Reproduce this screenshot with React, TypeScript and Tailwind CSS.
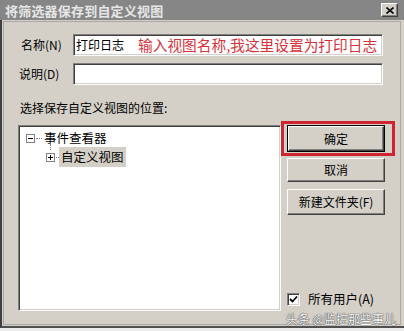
import React from "react";

const inset =
  "border border-t-[#808080] border-l-[#808080] border-b-white border-r-white shadow-[inset_1px_1px_0_#404040,inset_-1px_-1px_0_#d4d0c8]";
const raised =
  "border border-t-white border-l-white border-b-[#404040] border-r-[#404040] shadow-[inset_-1px_-1px_0_#808080]";

function TreeBox({ open }: { open: boolean }) {
  return (
    <span className="w-[9px] h-[9px] border border-[#808080] bg-white flex items-center justify-center relative shrink-0">
      <span className="absolute w-[5px] h-[1px] bg-black" />
      {!open && <span className="absolute w-[1px] h-[5px] bg-black" />}
    </span>
  );
}

export default function App() {
  return (
    <div className="w-[404px] h-[331px] bg-[#ececec] flex flex-col overflow-hidden text-black font-['Noto_Sans_CJK_SC','Liberation_Sans',sans-serif]">
      {/* title bar */}
      <div className="h-[20px] bg-[#868686] flex items-center justify-between pl-[5px] pr-[6px] shrink-0">
        <span className="text-[13px] font-bold text-[#e6e6e6] leading-none tracking-[0.2px]">
          将筛选器保存到自定义视图
        </span>
        <button className={`w-[17px] h-[14px] bg-[#d4d0c8] flex items-center justify-center ${raised}`}>
          <svg width="8" height="7" viewBox="0 0 8 7">
            <path d="M0.5 0.5 L7.5 6.5 M7.5 0.5 L0.5 6.5" stroke="#000" strokeWidth="1.6" />
          </svg>
        </button>
      </div>

      {/* body */}
      <div className="flex-1 bg-[#d4d0c8] border-l-2 border-[#404040] border-b-2 border-b-[#505050] pl-[1px] pr-[3px] pt-[1px] pb-[1px] mb-[3px] flex">
        <div className="flex-1 border border-[#a8a8a8] relative flex flex-col text-[12px] leading-none">
          {/* name */}
          <div className="flex items-center mt-[12px]">
            <span className="w-[52px] pl-[17px] box-content whitespace-nowrap">名称(N)</span>
            <div className={`w-[310px] h-[22px] bg-white flex items-center pl-[2px] overflow-hidden ${inset}`}>
              <span className="whitespace-nowrap shrink-0">打印日志</span>
              <span className="ml-[14px] text-[14.7px] text-[#d6323c] whitespace-nowrap shrink-0">
                输入视图名称,我这里设置为打印日志
              </span>
            </div>
          </div>
          {/* description */}
          <div className="flex items-center mt-[7px]">
            <span className="w-[54px] pl-[15px] box-content whitespace-nowrap">说明(D)</span>
            <div className={`w-[310px] h-[22px] bg-white ${inset}`} />
          </div>

          <div className="mt-[17px] pl-[16px]">选择保存自定义视图的位置:</div>

          <div className="flex mt-[11px] flex-1 mb-[13px]">
            {/* tree */}
            <div className={`ml-[14px] w-[263px] bg-white ${inset} pt-[4px]`}>
              <div className="flex items-center h-[17px] pl-[7px]">
                <TreeBox open />
                <span className="w-[6px] border-t border-dotted border-[#808080] mx-[1px]" />
                <span className="ml-[1px] text-[12.5px]">事件查看器</span>
              </div>
              <div className="flex items-center h-[20px] pl-[27px] relative">
                <span className="absolute left-[31px] top-[-3px] h-[6px] border-l border-dotted border-[#808080]" />
                <TreeBox open={false} />
                <span className="w-[3px] border-t border-dotted border-[#808080] ml-[1px]" />
                <span className="bg-[#d4d0c8] h-[20px] px-[2px] flex items-center text-[12.5px]">自定义视图</span>
              </div>
            </div>

            {/* buttons */}
            <div className="ml-[6px] w-[98px] flex flex-col">
              <div className="relative">
                <div className="border border-black h-[27px]">
                  <button className={`w-full h-full bg-[#d4d0c8] flex items-center justify-center ${raised}`}>
                    确定
                  </button>
                </div>
                <span className="absolute left-[-6px] right-[-10px] top-[-4px] bottom-[-4px] border-[3px] border-[#cf2530]" />
              </div>
              <button className={`mt-[6px] h-[24px] bg-[#d4d0c8] flex items-center justify-center ${raised}`}>
                取消
              </button>
              <button className={`mt-[7px] h-[26px] bg-[#d4d0c8] flex items-center justify-center ${raised}`}>
                新建文件夹(F)
              </button>
              <div className="mt-auto mb-[5px] flex items-center">
                <span className={`w-[13px] h-[13px] bg-white flex items-center justify-center ${inset}`}>
                  <svg width="9" height="9" viewBox="0 0 9 9">
                    <path d="M1 4 L3.5 6.5 L8 1.5" stroke="#000" strokeWidth="1.8" fill="none" />
                  </svg>
                </span>
                <span className="ml-[8px] text-[12.5px]">所有用户(A)</span>
              </div>
            </div>
          </div>

          {/* watermark */}
          <span className="absolute right-[4px] bottom-[-1px] text-[12px] text-[#f8f8f8] [text-shadow:0_0_1px_#555,0_0_1px_#555,0_0_1px_#555]">
            头条 @监控那些事儿
          </span>
        </div>
      </div>
    </div>
  );
}
